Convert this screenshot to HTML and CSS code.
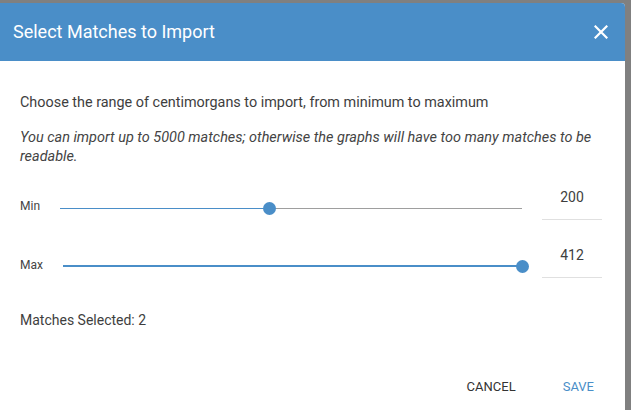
FILE: index.html
```html
<!DOCTYPE html>
<html lang="en">
<head>
<meta charset="utf-8">
<title>Select Matches to Import</title>
<link rel="stylesheet" href="styles.css">
</head>
<body>
<div class="dialog">
  <div class="header">
    <h2 class="title">Select Matches to Import</h2>
    <button class="close" aria-label="Close">
      <svg width="14" height="14" viewBox="0 0 14 14"><path d="M1.5 1.5 L12.5 12.5 M12.5 1.5 L1.5 12.5" stroke="#fff" stroke-width="2.2" stroke-linecap="square"/></svg>
    </button>
  </div>
  <div class="content">
    <p class="lead">Choose the range of centimorgans to import, from minimum to maximum</p>
    <p class="note">You can import up to 5000 matches; otherwise the graphs will have too many matches to be readable.</p>
    <div class="row">
      <span class="label">Min</span>
      <div class="slider">
        <div class="rail"></div>
        <div class="track thin" style="width:45.3%"></div>
        <div class="thumb" style="left:45.3%"></div>
      </div>
      <div class="field">200</div>
    </div>
    <div class="row row-max">
      <span class="label">Max</span>
      <div class="slider">
        <div class="rail"></div>
        <div class="track thick" style="width:100%"></div>
        <div class="thumb" style="left:100%"></div>
      </div>
      <div class="field">412</div>
    </div>
    <p class="count">Matches Selected: 2</p>
  </div>
  <div class="actions">
    <button class="btn">CANCEL</button>
    <button class="btn primary">SAVE</button>
  </div>
</div>
</body>
</html>
```
FILE: styles.css
```css
html, body {
  margin: 0;
  padding: 0;
  height: 100%;
  overflow: hidden;
}
body {
  background: #808080;
  font-family: Roboto, "Liberation Sans", sans-serif;
}
.dialog {
  margin-top: 3px;
  width: 625px;
  height: 420px;
  background: #fff;
  border-radius: 0 4px 0 0;
  overflow: hidden;
}
.header {
  height: 58px;
  background: #4a8ec8;
  display: flex;
  align-items: center;
  justify-content: space-between;
  padding: 0 17px 0 13px;
}
.title {
  margin: 0;
  font-size: 18px;
  font-weight: 400;
  color: #fff;
  line-height: 22px;
}
.close {
  background: none;
  border: 0;
  padding: 0;
  width: 14px;
  height: 14px;
  display: flex;
  margin-top: -1px;
}
.content {
  padding: 32px 23px 0 20px;
  color: #3e3e3e;
}
.lead {
  margin: 0;
  font-size: 14.4px;
  line-height: 20px;
}
.note {
  margin: 15px 0 0;
  font-size: 14.45px;
  line-height: 19px;
  font-style: italic;
  color: #444;
}
.row {
  display: flex;
  align-items: flex-end;
  gap: 20px;
  margin-top: 22px;
}
.row-max {
  margin-top: 26px;
}
.label {
  font-size: 12px;
  line-height: 14px;
  margin-bottom: 7px;
  color: #444;
}
.row-max .label {
  margin-bottom: 6px;
}
.slider {
  flex: 1;
  position: relative;
  height: 21px;
  margin-bottom: 1px;
}
.rail {
  position: absolute;
  left: 0;
  right: 0;
  top: 10px;
  height: 1px;
  background: #9e9e9e;
}
.track {
  position: absolute;
  left: 0;
  background: #4a8ec8;
}
.track.thin {
  top: 10px;
  height: 1px;
}
.track.thick {
  top: 9px;
  height: 2px;
}
.thumb {
  position: absolute;
  top: 4px;
  width: 13px;
  height: 13px;
  margin-left: -6px;
  border-radius: 50%;
  background: #4a8ec8;
}
.field {
  width: 60px;
  height: 31px;
  border-bottom: 1px solid #e0e0e0;
  text-align: center;
  font-size: 14px;
  line-height: 19px;
  color: #3e3e3e;
}
.count {
  margin: 32px 0 0;
  font-size: 14px;
  line-height: 20px;
}
.actions {
  display: flex;
  justify-content: flex-end;
  gap: 47px;
  padding-right: 31px;
  margin-top: 47px;
}
.btn {
  background: none;
  border: 0;
  padding: 0;
  font-family: Roboto, "Liberation Sans", sans-serif;
  font-size: 13px;
  line-height: 20px;
  color: #333;
}
.btn.primary {
  color: #4a8ec8;
}
```
